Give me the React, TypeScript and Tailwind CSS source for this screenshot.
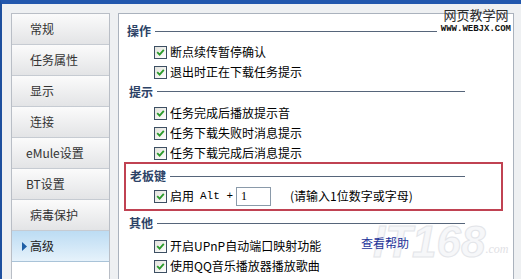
import React from "react";

const cjk = "font-['Noto_Sans_CJK_SC','Liberation_Sans',sans-serif]";

const navItems = ["常规", "任务属性", "显示", "连接", "eMule设置", "BT设置", "病毒保护"];

function Check() {
  return (
    <span className="flex h-[13px] w-[13px] shrink-0 items-center justify-center border border-[#3d4f63] bg-gradient-to-br from-[#e2e2dc] to-white">
      <svg width="9" height="9" viewBox="0 0 9 9">
        <path d="M1.2 4.2 L3.6 6.6 L7.8 1.8" stroke="#2a9a2a" strokeWidth="1.8" fill="none" />
      </svg>
    </span>
  );
}

function Header({ title, className = "" }: { title: string; className?: string }) {
  return (
    <div className={`flex h-5 items-center ${className}`}>
      <span className="text-[12px] font-bold text-[#2c4266]">{title}</span>
      <span className="ml-[4px] h-px flex-1 bg-[#56657a]" />
    </div>
  );
}

function Item({ label, className = "" }: { label: string; className?: string }) {
  return (
    <div className={`flex h-5 items-center gap-[3px] ${className}`}>
      <Check />
      <span className="text-[12px] text-black">{label}</span>
    </div>
  );
}

export default function App() {
  return (
    <div
      className={`relative flex h-[279px] w-[521px] overflow-hidden border-t-4 border-l-2 border-t-[#2257ad] border-l-[#1d4f9e] bg-[#eef0f2] pl-[9px] pt-[9px] ${cjk}`}
    >
      {/* sidebar */}
      <div className="flex h-[300px] w-[99px] shrink-0 flex-col border border-[#b9bec6] bg-white">
        {navItems.map((n) => (
          <div
            key={n}
            className={`flex h-[31px] items-center border-b border-[#c6cbd2] bg-gradient-to-b from-[#fbfbfb] to-[#e3e4e6] text-[12px] text-[#333] ${
              n.startsWith("eMule") || n.startsWith("BT") ? "pl-[14px]" : "pl-[18px]"
            }`}
          >
            {n}
          </div>
        ))}
        <div className="flex h-[31px] items-center gap-[3px] border-b border-[#a9c3d8] bg-gradient-to-b from-[#bcdcf3] to-[#e6f2fb] pl-[10px] text-[12px] text-[#222]">
          <svg width="5" height="9" viewBox="0 0 5 9">
            <path d="M0 0 L5 4.5 L0 9 Z" fill="#1f5fa6" />
          </svg>
          高级
        </div>
      </div>

      {/* panel */}
      <div className="relative ml-[8px] flex h-[300px] w-[396px] shrink-0 flex-col border border-[#aab2bd] bg-white pt-[7px]">
        {/* IT168 watermark */}
        <div className="pointer-events-none absolute left-[254px] top-[206px] flex items-end">
          <span className="text-[44px] font-bold italic leading-none text-[#f6f7f9] [-webkit-text-stroke:1px_#e3e5e9] font-['Liberation_Sans',sans-serif]">
            IT168
          </span>
          <span className="mb-[6px] text-[12px] italic text-[#dfe1e5] font-['Liberation_Serif',serif]">.com</span>
        </div>

        <Header title="操作" className="pl-[8px] mr-[76px]" />
        <Item label="断点续传暂停确认" className="mt-px pl-[35px]" />
        <Item label="退出时正在下载任务提示" className="pl-[35px]" />
        <Header title="提示" className="h-[19px] pl-[10px] mr-[48px]" />
        <Item label="任务完成后播放提示音" className="mt-[2px] pl-[35px]" />
        <Item label="任务下载失败时消息提示" className="pl-[35px]" />
        <Item label="任务下载完成后消息提示" className="pl-[35px]" />

        <div className="relative -mt-px ml-[5px] mr-[10px] flex flex-col border-2 border-[#c04252] pb-[3px] pt-[2px]">
          <Header title="老板键" className="pl-[4px] mr-[36px]" />
          <div className="flex h-5 items-center pl-[28px]">
            <Check />
            <span className="ml-[3px] text-[12px] text-black">启用</span>
            <span className="ml-[6px] text-[11px] text-black font-['Liberation_Mono',monospace]">Alt +</span>
            <span className="ml-[3px] flex h-[19px] w-[35px] items-center border border-[#8a9aaa] bg-white pl-[4px] text-[12px] text-black font-['Liberation_Serif',serif]">
              1
            </span>
            <span className="ml-[19px] text-[12px] text-black">(请输入1位数字或字母)</span>
          </div>
        </div>

        <Header title="其他" className="mt-[2px] pl-[10px] mr-[48px]" />
        <div className="mt-[3px] flex h-5 items-center gap-[3px] pl-[35px]">
          <Check />
          <span className="w-[188px] text-[12px] text-black">开启UPnP自动端口映射功能</span>
          <span className="relative mb-[6px] text-[12px] text-[#24349a]">查看帮助</span>
        </div>
        <Item label="使用QQ音乐播放器播放歌曲" className="pl-[35px]" />
      </div>

      {/* top-right watermark */}
      <div className="pointer-events-none absolute right-[10px] top-[3px] flex flex-col items-center">
        <span className="text-[13px] leading-[16px] text-[#2a2a2a]">网页教学网</span>
        <span className="mt-[2px] text-[9px] font-bold leading-[9px] text-[#111] font-['Liberation_Mono',monospace]">
          WWW.WEBJX.COM
        </span>
      </div>
    </div>
  );
}
